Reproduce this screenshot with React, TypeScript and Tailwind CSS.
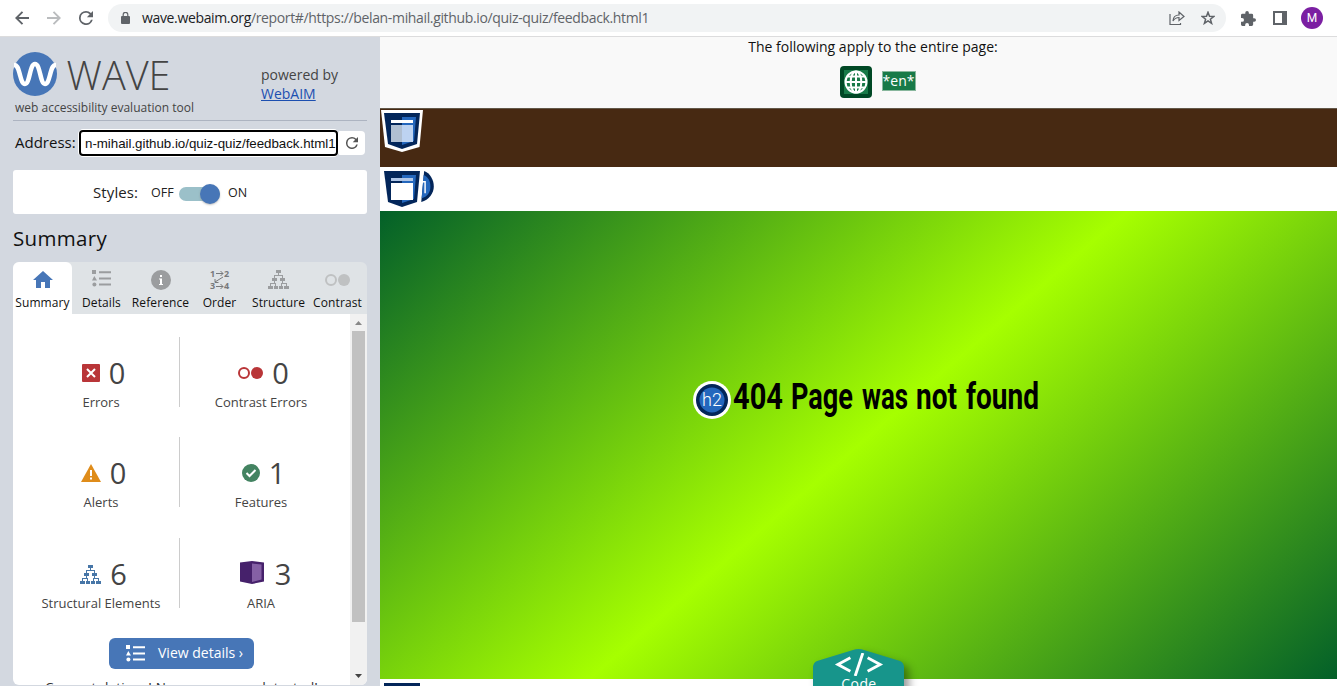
import type { ReactNode } from "react";

const StructureIcon = ({ className }: { className: string }) => (
  <svg viewBox="0 0 21 19" className={className} fill="currentColor" shapeRendering="crispEdges">
    <path d="M8 0h5v3H8zM4 8h5v3H4zM12 8h5v3h-5zM0 16h5v3H0zM5.500 16h4v3h-4zM11 16h4v3h-4zM16 16h5v3h-5z" />
    <path d="M10 3h1v2h-1zM6 5h9v1H6zM6 5h1v3H6zM14 5h1v3h-1zM6 11h1v2H6zM14 11h1v2h-1zM2 13h6v1H2zM13 13h6v1h-6zM2 13h1v3H2zM7 13h1v3H7zM13 13h1v3h-1zM18 13h1v3h-1z" />
  </svg>
);

const ListIcon = ({ className }: { className: string }) => (
  <svg viewBox="0 0 20 17" className={className} fill="currentColor">
    <path d="M0 0h4v4H0zM2.300 6 5 10.500H0zM7 1.300h12v2H7zM7 7.500h12v2H7zM7 13.500h12v2H7z" />
    <circle cx="2.400" cy="14.500" r="2" />
  </svg>
);

const ReloadIcon = ({ className }: { className: string }) => (
  <svg viewBox="4 4 16 16" className={className} fill="currentColor">
    <path d="M17.650 6.350A7.960 7.960 0 0 0 12 4a8 8 0 1 0 7.730 10h-2.080A6 6 0 1 1 12 6c1.660 0 3.140.69 4.220 1.780L13 11h7V4z" />
  </svg>
);

const RegionIcon = ({ muted }: { muted?: boolean }) => (
  <svg viewBox="0 0 42 42" className="h-[42px] w-[42px]">
    <path d="M0 0h42l-3.500 37L21 42 4 37z" fill="#fff" />
    <path d="M3 3h36l-3 31-15 5-14-5z" fill="#03265a" />
    <path d="M21 7h14l-2 24-12 4z" fill="#2467bd" />
    <path d="M10 10h22v3H10z" fill={muted ? "#afc6e7" : "#fff"} />
    <path d="M10 15h11v17H10z" fill={muted ? "#fff" : "#b0bfd1"} />
    <path d="M21 15h11v17H21z" fill={muted ? "#fff" : "#bdd3f1"} />
  </svg>
);

function BrowserBar() {
  return (
    <header className="flex h-[37px] shrink-0 items-center border-b border-[#dcdcdd] bg-white text-[#5f6368]">
      <svg className="ml-[15px] h-[14px] w-[14px]" viewBox="0 0 14 14" fill="none" stroke="#5f6368" strokeWidth="1.900"><path d="M14 7H1.500M7.500.8 1.300 7l6.200 6.200" /></svg>
      <svg className="ml-[18px] h-[14px] w-[14px]" viewBox="0 0 14 14" fill="none" stroke="#babcbe" strokeWidth="1.900"><path d="M0 7h12.500M6.500.8 12.700 7l-6.200 6.200" /></svg>
      <ReloadIcon className="ml-[18px] h-[14px] w-[14px]" />
      <div className="ml-[15px] flex h-7 w-[1118px] items-center rounded-full bg-[#f1f3f4]">
        <svg className="ml-[13px] h-[12px] w-[9px]" viewBox="0 0 9 12" fill="#5f6368"><rect y="4" width="9" height="8" rx="1" /><path d="M2.200 4V2.600a2.300 2.300 0 0 1 4.600 0V4" fill="none" stroke="#5f6368" strokeWidth="1.200" /></svg>
        <div className="ml-3 w-[520px] whitespace-nowrap font-['Open_Sans',sans-serif] text-[14px] leading-5 tracking-[-0.350px]"><span className="text-[#202124]">wave.webaim.org</span>/report#/https://belan-mihail.github.io/quiz-quiz/feedback.html1</div>
        <svg className="ml-auto h-[15px] w-[16px]" viewBox="0 0 16 15" fill="none" stroke="#5f6368" strokeWidth="1.200"><path d="M1 3v10.500h10.500V12M4 10c.2-4 2.500-6 6-6V1l5 4.500-5 4v-3C7.200 6.500 5.500 7.500 4 10z" /></svg>
        <svg className="ml-[16px] mr-[11px] h-[14px] w-[14px]" viewBox="0 0 14 14" fill="none" stroke="#5f6368" strokeWidth="1.500"><path d="m7 1.300 1.500 4 4.300.2-3.400 2.700 1.200 4.200L7 10l-3.600 2.400 1.200-4.200L1.200 5.500l4.300-.2z" /></svg>
      </div>
      <svg className="ml-[15px] h-[15px] w-[15px]" viewBox="2 1 21 21" fill="currentColor"><path d="M20.500 11H19V7a2 2 0 0 0-2-2h-4V3.500a2.500 2.500 0 0 0-5 0V5H4a2 2 0 0 0-2 2v3.800h1.500a2.700 2.700 0 0 1 0 5.400H2V20a2 2 0 0 0 2 2h3.800v-1.500a2.700 2.700 0 0 1 5.400 0V22H17a2 2 0 0 0 2-2v-4h1.500a2.500 2.500 0 0 0 0-5z" /></svg>
      <svg className="ml-[17px] h-[14px] w-[14px]" viewBox="0 0 14 14" fill="currentColor"><path fillRule="evenodd" d="M0 0h14v14H0zM2 2v10h7V2z" /></svg>
      <div className="ml-[14px] flex h-[22px] w-[22px] items-center justify-center rounded-full bg-[#7b1fa2] font-['Roboto',sans-serif] text-[12px] text-white">M</div>
    </header>
  );
}

function Tab({ label, children, active }: { label: string; children: ReactNode; active?: boolean }) {
  return (
    <div className={`flex w-[59px] flex-col items-center ${active ? "rounded-t-md bg-white" : ""}`}>
      <div className="flex h-[34px] items-center justify-center pt-px text-[#9b9d9f]">{children}</div>
      <div className="whitespace-nowrap text-[12px] leading-[14px] tracking-[0.100px] text-[#111]">{label}</div>
    </div>
  );
}

function Stat({ value, label, children, right }: { value: string; label: string; children: ReactNode; right?: boolean }) {
  return (
    <div className={`flex flex-col items-center ${right ? "w-[162px]" : "w-[158px]"}`}>
      <div className={`flex h-[53px] items-end justify-center gap-[9px] ${right ? "pl-[5px]" : "pl-[5px]"}`}>
        <div className="mb-[8px] flex h-[18px] items-center">{children}</div>
        <div className="h-[34px] text-[29px] leading-[34px] text-[#444]">{value}</div>
      </div>
      <div className="mt-[4px] whitespace-nowrap text-[13px] leading-[16px] text-[#444]">{label}</div>
    </div>
  );
}

function Sidebar() {
  return (
    <aside className="flex w-[380px] shrink-0 flex-col bg-[#d3d8e0] pl-[13px] pr-[13px] text-[#111]">
      <div className="flex h-[84px] w-[354px] border-b border-[#adb4c1]">
        <div className="w-[248px] pt-[15px]">
          <div className="flex h-[44px] items-center">
            <svg viewBox="0 0 44 44" className="h-[44px] w-[44px]"><circle cx="22" cy="22" r="22" fill="#4776b7" /><path d="M1 13c4 0 4.500 5 6 10 1.600 6 2.600 9 5 9 5 0 4.500-20 10-20s5 20 10 20c2.400 0 3.400-3 5-9 1.500-5 2-10 6-10" fill="none" stroke="#fff" strokeWidth="4.500" /></svg>
            <svg viewBox="0 0 106 44" className="ml-[9px] h-[44px] w-[106px] overflow-visible"><text x="0.500" y="38" textLength="104" lengthAdjust="spacingAndGlyphs" className="fill-[#444] font-['Open_Sans',sans-serif] text-[40px] font-light">WAVE</text></svg>
          </div>
          <div className="ml-[2px] mt-[4px] whitespace-nowrap text-[12px] leading-4 text-[#444]">web accessibility evaluation tool</div>
        </div>
        <div className="pt-[28px] text-[14px] leading-[19px] text-[#444]"><div>powered by</div><a className="text-[#1c4fb0] underline">WebAIM</a></div>
      </div>
      <div className="mt-[8px] flex h-[28px] items-center">
        <div className="mb-[2px] ml-[2px] w-[63px] shrink-0 whitespace-nowrap text-[15px]">Address:</div>
        <div className="flex h-[28px] w-[261px] shrink-0 items-center rounded-[5px] border border-white bg-white">
          <div className="flex h-[26px] w-[259px] items-center overflow-hidden rounded-[4px] border-2 border-black bg-white pl-[4px] font-['Liberation_Sans',sans-serif] text-[13.333px]"><span className="whitespace-nowrap pt-px tracking-[-0.030px]">n-mihail.github.io/quiz-quiz/feedback.html1</span></div>
        </div>
        <div className="flex h-[24px] w-[26px] shrink-0 items-center justify-center rounded-r bg-white text-[#555]"><ReloadIcon className="h-[12px] w-[12px]" /></div>
      </div>
      <div className="mt-[13px] flex h-[44px] w-[354px] items-center rounded-[3px] bg-white pl-[80px] text-[#222]">
        <span className="w-[58px] pt-px text-[15px] tracking-[0.100px]">Styles:</span>
        <span className="w-[28px] pt-[2px] text-[12.500px]">OFF</span>
        <div className="mt-[4px] flex h-[14px] w-[41px] items-center justify-end rounded-full bg-[#9bc0c9]"><div className="h-5 w-5 shrink-0 rounded-full bg-[#4776b7] shadow-[0_1px_2px_#8888]" /></div>
        <span className="ml-[8px] pt-[2px] text-[12.500px]">ON</span>
      </div>
      <h1 className="mt-[9px] h-[39px] text-[20.500px] leading-[30px] tracking-[0.320px]">Summary</h1>
      <div className="flex h-[52px] w-[354px] shrink-0 rounded-t-md bg-[#dfe3e6]">
        <Tab label="Summary" active><svg viewBox="0 0 20 17" className="h-[17px] w-[20px] fill-[#4776b7]"><path d="M10 0 0 9h3v8h5v-6h4v6h5V9h3z" /></svg></Tab>
        <Tab label="Details"><ListIcon className="mb-[3px] h-[17px] w-[20px]" /></Tab>
        <Tab label="Reference"><svg viewBox="0 0 20 20" className="h-5 w-5"><circle cx="10" cy="10" r="10" fill="currentColor" /><path d="M9 5h2v2H9zM8 8.500h3V14h1v1H8v-1h1V9.500H8z" fill="#fff" /></svg></Tab>
        <Tab label="Order"><svg viewBox="0 0 20 22" className="h-[22px] w-5 overflow-visible fill-[#77797b] text-[9px] font-bold"><text x="0" y="8">1</text><text x="14" y="8">2</text><text x="0" y="20">3</text><text x="14" y="20">4</text><path d="M6 4.500h7M10.500 2l2.500 2.500L10.500 7M6 17.500h7M10.500 15l2.500 2.500-2.500 2.500M13 8l-8 5m0-3v3.500h3.500" stroke="#77797b" fill="none" /></svg></Tab>
        <Tab label="Structure"><StructureIcon className="h-[19px] w-[21px]" /></Tab>
        <Tab label="Contrast"><svg viewBox="0 0 25 12" className="h-[12px] w-[25px]"><circle cx="6" cy="6" r="5" fill="none" stroke="#bfc1c2" strokeWidth="2" /><circle cx="19" cy="6" r="6" fill="#bfc1c2" /></svg></Tab>
      </div>
      <div className="flex h-[371px] w-[354px] overflow-hidden rounded-b-md bg-white">
        <div className="w-[337px] pt-[23px]">
          <div className="flex h-[100px] pl-[9px]">
            <Stat value="0" label="Errors"><svg viewBox="0 0 18 18" className="h-[18px] w-[18px]"><rect width="18" height="18" rx="1" fill="#b93538" /><path d="m5 5 8 8m0-8-8 8" stroke="#fff" strokeWidth="2" /></svg></Stat>
            <div className="-ml-px h-[70px] border-l border-[#ccc]" />
            <Stat value="0" label="Contrast Errors" right><svg viewBox="0 0 25 12" className="h-[12px] w-[25px]"><circle cx="6" cy="6" r="5" fill="none" stroke="#b93538" strokeWidth="2" /><circle cx="19" cy="6" r="6" fill="#b93538" /></svg></Stat>
          </div>
          <div className="flex h-[101px] pl-[9px]">
            <Stat value="0" label="Alerts"><svg viewBox="0 0 20 18" className="h-[18px] w-[20px]"><path d="m10 0 10 18H0z" fill="#df8c1a" /><path d="M9 6h2v6H9zM9 13.500h2v2H9z" fill="#fff" /></svg></Stat>
            <div className="-ml-px h-[70px] border-l border-[#ccc]" />
            <Stat value="1" label="Features" right><svg viewBox="0 0 18 18" className="h-[18px] w-[18px]"><circle cx="9" cy="9" r="9" fill="#438361" /><path d="m4.500 9 3 3 6-6" fill="none" stroke="#fff" strokeWidth="2" /></svg></Stat>
          </div>
          <div className="flex h-[100px] pl-[9px]">
            <Stat value="6" label="Structural Elements"><StructureIcon className="h-[19px] w-[21px] text-[#4776a7]" /></Stat>
            <div className="-ml-px h-[70px] border-l border-[#ccc]" />
            <Stat value="3" label="ARIA" right><svg viewBox="0 0 24 23" className="mb-[3px] ml-[4px] mr-[2px] h-[23px] w-[24px]"><path d="m0 1.500 12-1.500 12 1.500v19L12 23 0 20.500z" fill="#46216b" /><path d="m12 2.500 9.500 1v15L12 21z" fill="#8560a5" /></svg></Stat>
          </div>
          <div className="ml-[96px] flex h-[31px] w-[145px] items-center rounded-md bg-[#4776b7] text-white"><ListIcon className="ml-[17px] h-[17px] w-[20px]" /><span className="mb-[2px] ml-[12px] whitespace-nowrap text-[14px]">View details ›</span></div>
          <p className="mt-[9px] whitespace-nowrap pl-[32px] text-[13.500px] leading-[19px] tracking-[0.200px] text-[#333]">Congratulations! No errors were detected!</p>
        </div>
        <div className="flex w-[17px] shrink-0 flex-col items-center bg-[#f1f1f1]">
          <svg viewBox="0 0 17 17" className="h-[17px] w-[17px] shrink-0"><path d="m5 11 3.500-4 3.500 4z" fill="#888" /></svg>
          <div className="h-[291px] w-[13px] bg-[#c1c1c1]" />
          <svg viewBox="0 0 17 17" className="mt-auto h-[17px] w-[17px] shrink-0"><path d="M5 6h7l-3.500 4z" fill="#444" /></svg>
        </div>
      </div>
    </aside>
  );
}

const headingWords = [
  { text: "404", x: 0, width: 50 },
  { text: "Page", x: 58, width: 62 },
  { text: "was", x: 129, width: 46 },
  { text: "not", x: 183, width: 41 },
  { text: "found", x: 233, width: 73 },
];

function Preview() {
  return (
    <main className="relative flex w-[957px] shrink-0 flex-col overflow-hidden bg-white">
      <div className="flex h-[71px] shrink-0 flex-col items-center bg-[#f9f9f9] text-[#111]">
        <div className="ml-[29px] h-[29px] whitespace-nowrap text-[14px] leading-5">The following apply to the entire page:</div>
        <div className="ml-[38px] flex w-[76px] items-center justify-between">
          <svg viewBox="0 0 32 32" className="h-8 w-8"><rect width="32" height="32" rx="4" fill="#004825" /><rect x="4" y="4" width="24" height="24" fill="#187a48" /><g fill="none" stroke="#fff" strokeWidth="2"><circle cx="16" cy="16" r="10.500" /><ellipse cx="16" cy="16" rx="5.300" ry="10.500" /><path d="M16 5.500v21M5.500 16h21M7.500 10.500h17M7.500 21.500h17" /></g></svg>
          <span className="mb-[3px] flex h-[20px] w-[34px] items-center justify-center border border-[#88b79d] bg-[#187a48] text-[14px] leading-none text-white">*en*</span>
        </div>
      </div>
      <div className="h-[59px] shrink-0 border-t border-[#635849] bg-[#472912] pl-px pt-px"><RegionIcon /></div>
      <div className="flex h-[44px] shrink-0 pl-px pt-px">
        <RegionIcon muted />
        <svg viewBox="0 0 14 32" className="-ml-[2px] mt-[3px] h-[31px] w-[14px]"><path d="M3 0C9 2 13 9 13 16S8 30 0 32z" fill="#03265a" /><path d="M2.500 4C7 6 9.500 10 9.500 16S6 27 .5 28z" fill="#2467bd" /><path d="M1 11h3v12" fill="none" stroke="#fff" strokeWidth="1.500" /></svg>
      </div>
      <section className="flex h-[468px] shrink-0 items-start bg-[linear-gradient(139deg,#036029_0%,#a6ff00_50%,#036029_100%)] pl-[313px] pt-[170px]">
        <svg viewBox="0 0 38 38" className="h-[38px] w-[38px]"><circle cx="19" cy="19" r="19" fill="#fff" /><circle cx="19" cy="19" r="16" fill="#03265a" /><circle cx="19" cy="19" r="12.500" fill="#2467bd" /><text x="19" y="25" textAnchor="middle" className="fill-white font-['Roboto',sans-serif] text-[18px] font-light">h2</text></svg>
        <h2 className="-mt-px ml-[2px] w-[308px]"><svg viewBox="0 0 308 42" className="h-[42px] w-[308px] overflow-visible fill-black font-['Roboto',sans-serif] text-[36px] font-bold">{headingWords.map((w) => <text key={w.text} x={w.x} y="29" textLength={w.width} lengthAdjust="spacingAndGlyphs">{w.text}</text>)}</svg></h2>
      </section>
      <div className="h-[7px] shrink-0 bg-white pl-[4px] pt-[4px]"><div className="h-[3px] w-[36px] bg-[#03265a]" /></div>
      <div className="absolute left-[433px] top-[611px] flex h-[60px] w-[91px] flex-col items-center">
        <svg viewBox="0 0 91 60" className="absolute left-0 top-0 h-[60px] w-[91px] overflow-visible drop-shadow-[5px_5px_4px_rgba(0,0,0,0.4)]"><path d="M4 13 40 2q5.500-2 11 0l36 11q4 1.500 4 7v40H0V20q0-5.500 4-7" fill="#17958b" /></svg>
        <svg viewBox="0 0 50 24" className="relative mt-[5px] h-[23px] w-[50px] fill-none stroke-white stroke-[3]"><path d="M16 5 3 12l13 7M34 5l13 7-13 7M29 0l-8 24" /></svg>
        <span className="relative ml-px text-[14px] leading-[16px] tracking-[0.400px] text-white">Code</span>
      </div>
    </main>
  );
}

export default function App() {
  return (
    <div className="flex h-[686px] w-[1337px] flex-col overflow-hidden font-['Open_Sans',sans-serif]">
      <BrowserBar />
      <div className="flex h-[649px] shrink-0"><Sidebar /><Preview /></div>
    </div>
  );
}
